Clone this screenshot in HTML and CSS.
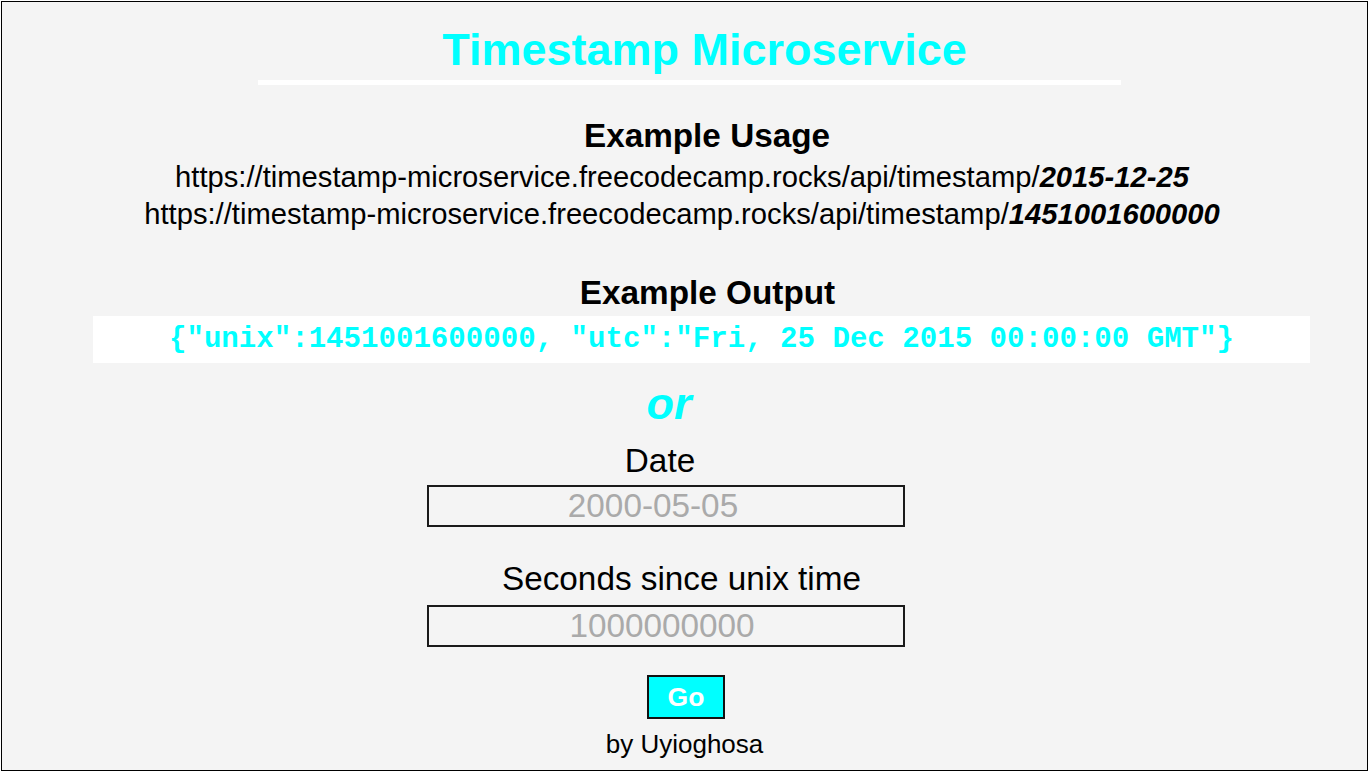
FILE: index.html
```html
<!DOCTYPE html>
<html lang="en">
<head>
<meta charset="utf-8">
<title>Timestamp Microservice</title>
<link rel="stylesheet" href="styles.css">
</head>
<body>
<div class="page">
  <h1 class="title">Timestamp Microservice</h1>
  <div class="rule"></div>
  <h3 class="heading heading-usage">Example Usage</h3>
  <div class="urls">
    <div>https://timestamp-microservice.freecodecamp.rocks/api/timestamp/<b><i>2015-12-25</i></b></div>
    <div>https://timestamp-microservice.freecodecamp.rocks/api/timestamp/<b><i>1451001600000</i></b></div>
  </div>
  <h3 class="heading heading-output">Example Output</h3>
  <div class="code"><code>{"unix":1451001600000, "utc":"Fri, 25 Dec 2015 00:00:00 GMT"}</code></div>
  <div class="or">or</div>
  <form class="form">
    <label class="label label-date" for="date">Date</label>
    <input class="field" id="date" type="text" placeholder="2000-05-05">
    <label class="label label-secs" for="secs">Seconds since unix time</label>
    <input class="field field-secs" id="secs" type="text" placeholder="1000000000">
    <button class="go" type="button">Go</button>
  </form>
  <div class="footer">by Uyioghosa</div>
</div>
</body>
</html>
```
FILE: styles.css
```css
html, body {
  margin: 0;
  padding: 0;
  background: #ffffff;
}

.page {
  margin: 1px 2px 1px 1px;
  border: 1px solid #000;
  height: 768px;
  background: #f4f4f4;
  display: flex;
  flex-direction: column;
  align-items: center;
  font-family: "Liberation Sans", Arial, sans-serif;
  color: #000;
  overflow: hidden;
}

.title {
  margin: 23px 0 0 40px;
  font-size: 45px;
  line-height: 50px;
  font-weight: bold;
  color: #00ffff;
}

.rule {
  margin: 5px 0 0 10px;
  width: 863px;
  height: 5px;
  background: #ffffff;
}

.heading {
  margin: 0;
  font-size: 33.3px;
  line-height: 38px;
  font-weight: bold;
}

.heading-usage {
  margin: 32px 0 0 45px;
}

.urls {
  margin: 4px 0 0 -5px;
  font-size: 29.2px;
  line-height: 37px;
  text-align: center;
}

.heading-output {
  margin: 41px 0 0 46px;
}

.code {
  margin: 4px 0 0 34px;
  width: 1217px;
  height: 47px;
  background: #ffffff;
  text-align: center;
  line-height: 48px;
}

.code code {
  font-family: "Liberation Mono", "Courier New", monospace;
  font-size: 29.1px;
  font-weight: bold;
  color: #00ffff;
}

.or {
  margin: 16px 0 0 -31px;
  font-size: 45px;
  line-height: 50px;
  font-weight: bold;
  font-style: italic;
  color: #00ffff;
}

.form {
  display: flex;
  flex-direction: column;
  align-items: center;
  margin: 0;
}

.label {
  font-size: 33.3px;
  line-height: 38px;
}

.label-date {
  margin: 13px 0 0 -49px;
}

.label-secs {
  margin: 33px 0 0 -6px;
}

.field {
  margin: 5px 0 0 -37px;
  box-sizing: border-box;
  width: 478px;
  height: 42px;
  border: 2px solid #1a1a1a;
  background: transparent;
  padding: 0 28px 0 2px;
  font-family: "Liberation Sans", Arial, sans-serif;
  font-size: 33.3px;
  text-align: center;
  outline: none;
}

.field::placeholder {
  color: #aaaaaa;
  opacity: 1;
}

.field-secs {
  margin-top: 7px;
  padding: 0 10px 0 2px;
}

.go {
  margin: 28px 0 0 3px;
  box-sizing: border-box;
  width: 78px;
  height: 44px;
  border: 2px solid #111;
  background: #00ffff;
  color: #ffffff;
  font-family: "Liberation Sans", Arial, sans-serif;
  font-size: 26.5px;
  font-weight: bold;
  padding: 0;
  line-height: 40px;
}

.footer {
  margin: 9px 0 0 0;
  font-size: 26px;
  line-height: 32px;
}
```
